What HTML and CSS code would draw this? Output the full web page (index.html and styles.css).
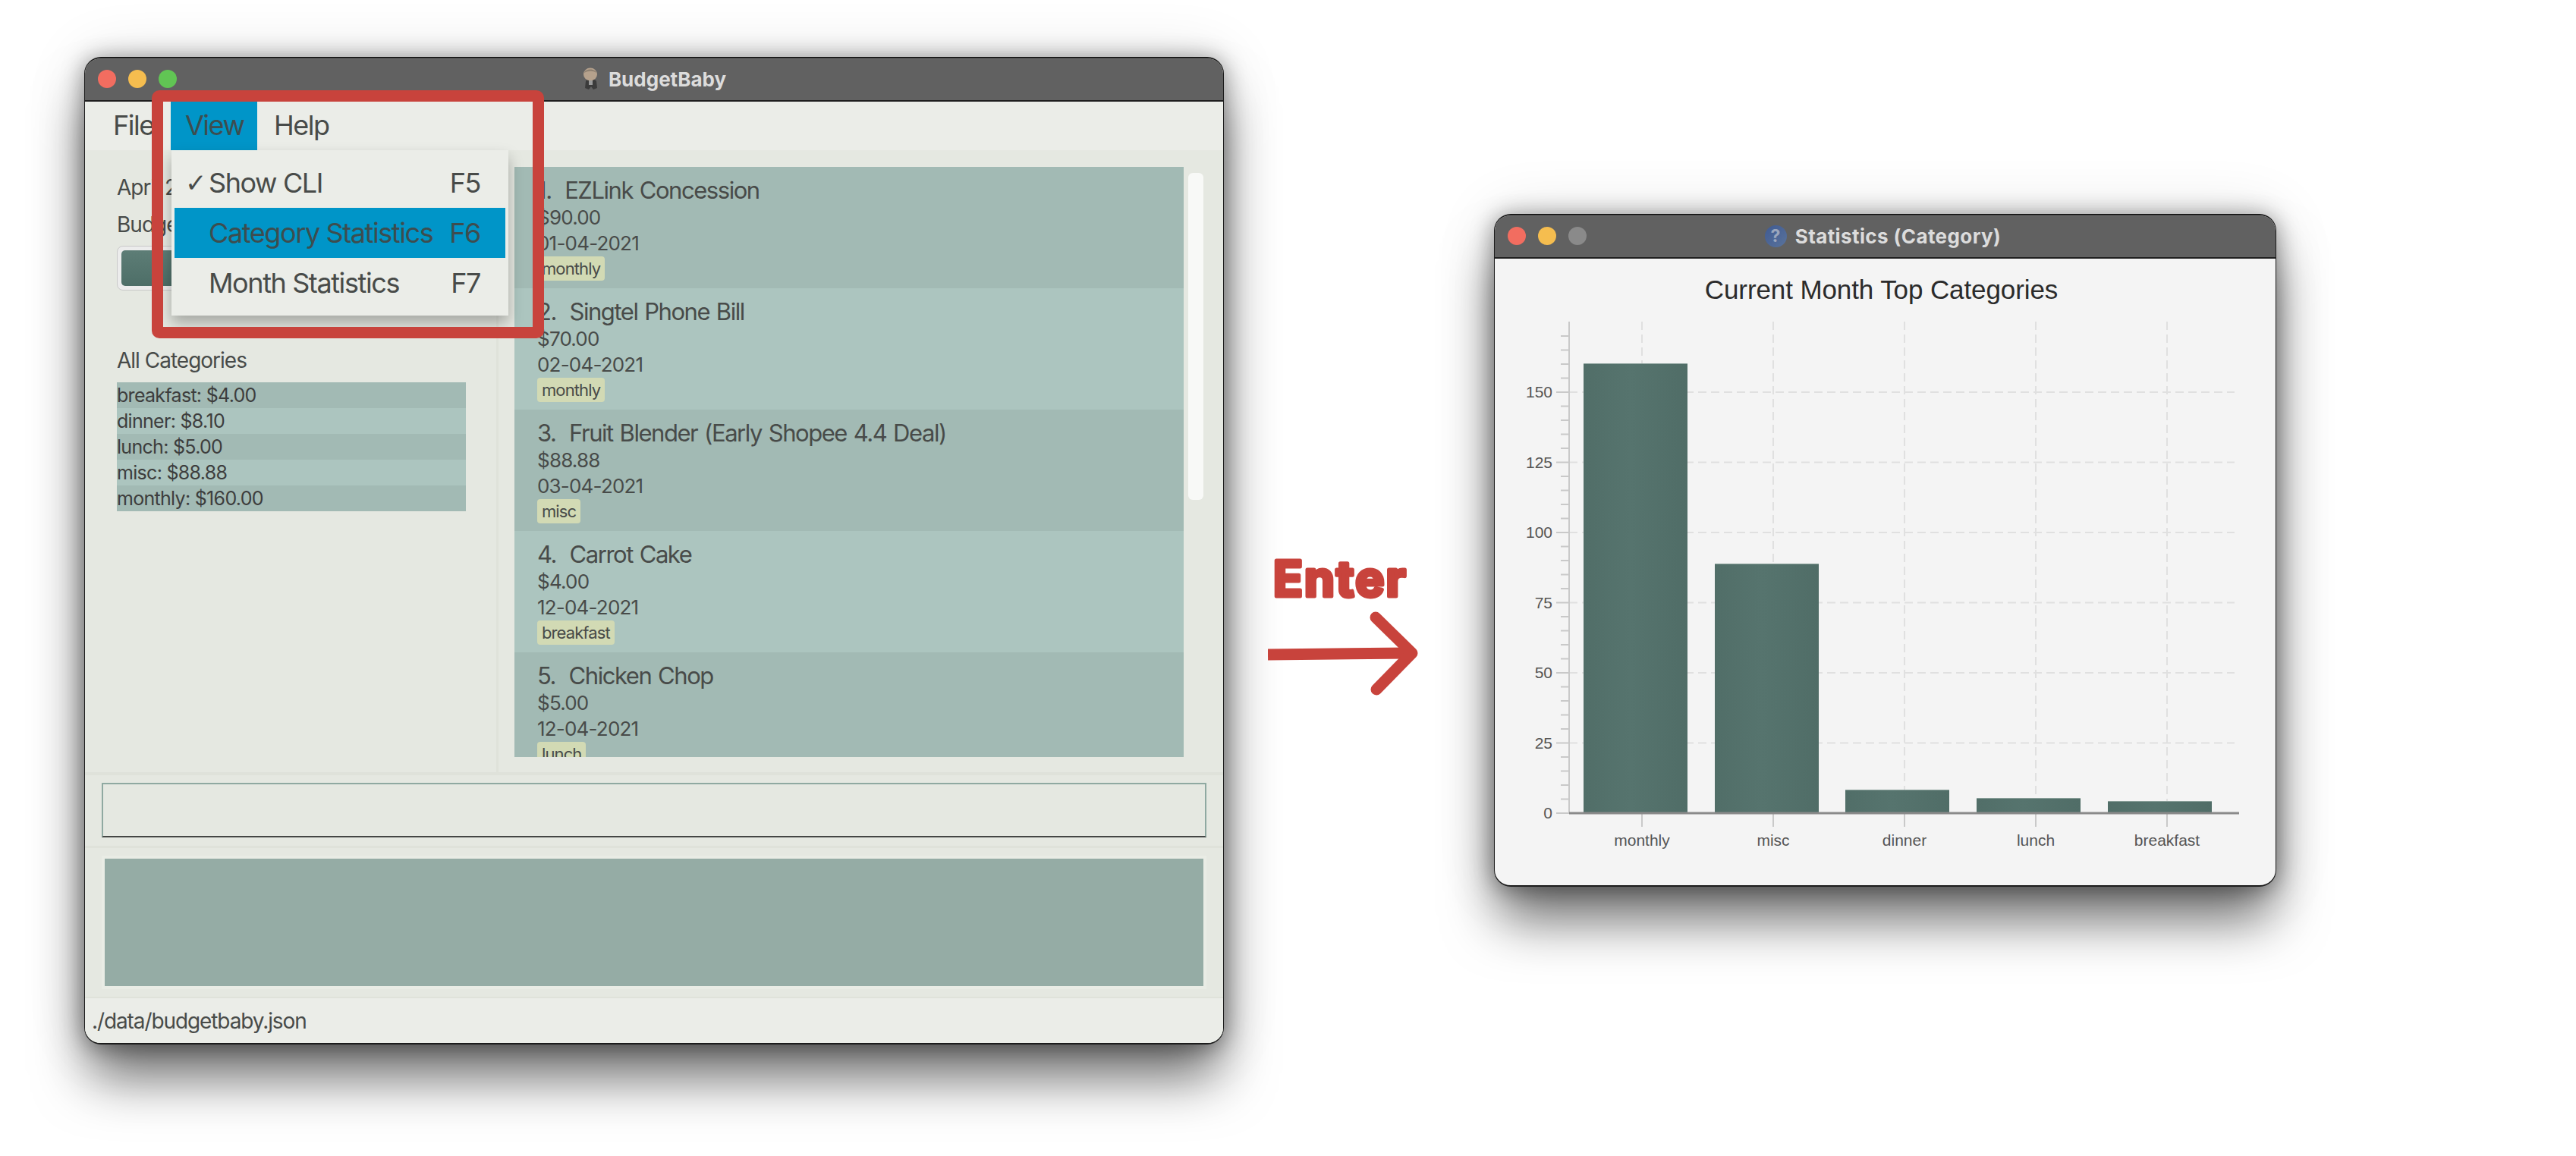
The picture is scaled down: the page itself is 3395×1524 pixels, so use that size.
FILE: index.html
```html
<!DOCTYPE html>
<html lang="en">

<head>
    <meta charset="UTF-8">
    <title>BudgetBaby - View menu</title>
    <link rel="stylesheet" href="styles.css">
</head>

<body>
    <div class="window main-window">
        <div class="titlebar">
            <div class="lights">
                <span class="light red"></span>
                <span class="light yellow"></span>
                <span class="light green"></span>
            </div>
            <div class="win-title">
                <svg class="baby-icon" width="24" height="30" viewBox="0 0 24 30">
                    <path d="M5 18 C5 15 19 15 19 18 L20 27 L15 29 L12 25 L9 29 L4 27 Z" fill="#3b3b3b" />
                    <ellipse cx="11" cy="9" rx="9" ry="8.5" fill="#b5a18c" />
                    <path d="M3 7 C4 1 18 1 19 7 C15 4 8 4 3 7 Z" fill="#8e8071" />
                    <rect x="9" y="17" width="5" height="6" fill="#9a9a9a" />
                </svg>
                <span>BudgetBaby</span>
            </div>
        </div>

        <div class="menubar">
            <span class="menu-item file-item">File</span>
            <span class="menu-item view-item active">View</span>
            <span class="menu-item help-item">Help</span>
        </div>

        <div class="content">
            <div class="left-pane">
                <p class="month-label">April 2021</p>
                <p class="budget-label">Budget</p>
                <div class="budget-bar">
                    <div class="budget-fill"></div>
                </div>
                <p class="cat-heading">All Categories</p>
                <ul class="cat-list">
                    <li>breakfast: $4.00</li>
                    <li>dinner: $8.10</li>
                    <li>lunch: $5.00</li>
                    <li>misc: $88.88</li>
                    <li>monthly: $160.00</li>
                </ul>
            </div>
            <div class="right-pane">
                <div class="fin-list">
                    <div class="fin-card">
                        <div class="fin-title">1.  EZLink Concession</div>
                        <div class="fin-line">$90.00</div>
                        <div class="fin-line">01-04-2021</div>
                        <span class="tag">monthly</span>
                    </div>
                    <div class="fin-card">
                        <div class="fin-title">2.  Singtel Phone Bill</div>
                        <div class="fin-line">$70.00</div>
                        <div class="fin-line">02-04-2021</div>
                        <span class="tag">monthly</span>
                    </div>
                    <div class="fin-card">
                        <div class="fin-title">3.  Fruit Blender (Early Shopee 4.4 Deal)</div>
                        <div class="fin-line">$88.88</div>
                        <div class="fin-line">03-04-2021</div>
                        <span class="tag">misc</span>
                    </div>
                    <div class="fin-card">
                        <div class="fin-title">4.  Carrot Cake</div>
                        <div class="fin-line">$4.00</div>
                        <div class="fin-line">12-04-2021</div>
                        <span class="tag">breakfast</span>
                    </div>
                    <div class="fin-card">
                        <div class="fin-title">5.  Chicken Chop</div>
                        <div class="fin-line">$5.00</div>
                        <div class="fin-line">12-04-2021</div>
                        <span class="tag">lunch</span>
                    </div>
                </div>
                <div class="scroll-thumb"></div>
            </div>
        </div>

        <div class="command-section">
            <div class="command-box"></div>
        </div>

        <div class="result-section">
            <div class="result-box"></div>
        </div>

        <div class="statusbar">./data/budgetbaby.json</div>

        <div class="dropdown">
            <div class="drop-row">
                <span class="drop-check">✓</span>
                <span class="drop-label">Show CLI</span>
                <span>F5</span>
            </div>
            <div class="drop-row selected">
                <span class="drop-check"></span>
                <span class="drop-label">Category Statistics</span>
                <span>F6</span>
            </div>
            <div class="drop-row">
                <span class="drop-check"></span>
                <span class="drop-label">Month Statistics</span>
                <span>F7</span>
            </div>
        </div>
    </div>

    <div class="annotation-box"></div>

    <svg class="enter-note" width="210" height="220" viewBox="0 0 210 220">
        <text class="enter-text" x="7" y="80">Enter</text>
        <path class="arrow-stroke" d="M0 157 L185 155" />
        <path class="arrow-stroke arrow-head" d="M142 108 L190 155 L143 203" />
    </svg>

    <div class="window stats-window">
        <div class="titlebar">
            <div class="lights">
                <span class="light red"></span>
                <span class="light yellow"></span>
                <span class="light grey"></span>
            </div>
            <div class="win-title stats-title">
                <span class="help-icon">?</span>
                <span>Statistics (Category)</span>
            </div>
        </div>

        <div class="chart-area">
            <h1 class="chart-title">Current Month Top Categories</h1>
            <svg class="chart" width="1027" height="760" viewBox="0 0 1027 760">
                <defs>
                    <linearGradient id="barFill" x1="0" x2="1" y1="0" y2="0">
                        <stop offset="0" stop-color="#516e68" />
                        <stop offset="0.45" stop-color="#56746e" />
                        <stop offset="1" stop-color="#506d67" />
                    </linearGradient>
                </defs>

                <!-- grid -->
                <path class="grid-h" d="M97 106H974M97 198.5H974M97 291H974M97 383.5H974M97 476H974M97 568.5H974" />
                <path class="grid-v" d="M193 13V661M366 13V661M539 13V661M712 13V661M885 13V661" />

                <!-- axes -->
                <path class="tick" d="M97 13V661" />
                <path class="tick" d="M86 32h11M86 50.5h11M86 69h11M86 87.5h11M86 124.5h11M86 143h11M86 161.5h11M86 180h11M86 217h11M86 235.5h11M86 254h11M86 272.5h11M86 309.5h11M86 328h11M86 346.5h11M86 365h11M86 402h11M86 420.5h11M86 439h11M86 457.5h11M86 494.5h11M86 513h11M86 531.5h11M86 550h11M86 587h11M86 605.5h11M86 624h11M86 642.5h11" />
                <path class="tick" d="M80 106h17M80 198.5h17M80 291h17M80 383.5h17M80 476h17M80 568.5h17M80 661h17" />
                <path class="tick" d="M193 661v18M366 661v18M539 661v18M712 661v18M885 661v18" />

                <!-- bars -->
                <rect class="bar" x="116" y="68" width="137" height="593" />
                <rect class="bar" x="289" y="332" width="137" height="329" />
                <rect class="bar" x="461" y="630" width="137" height="31" />
                <rect class="bar" x="634" y="641" width="137" height="20" />
                <rect class="bar" x="807" y="645" width="137" height="16" />
                <path class="bar-top" d="M116 68.5h137M289 332.5h137M461 630.5h137M634 641.5h137M807 645.5h137" />

                <path class="x-axis" d="M97 661H980" />

                <text class="axis-label y-label" x="75" y="113">150</text>
                <text class="axis-label y-label" x="75" y="206">125</text>
                <text class="axis-label y-label" x="75" y="298">100</text>
                <text class="axis-label y-label" x="75" y="391">75</text>
                <text class="axis-label y-label" x="75" y="483">50</text>
                <text class="axis-label y-label" x="75" y="576">25</text>
                <text class="axis-label y-label" x="75" y="668">0</text>

                <text class="axis-label x-label" x="193" y="704">monthly</text>
                <text class="axis-label x-label" x="366" y="704">misc</text>
                <text class="axis-label x-label" x="539" y="704">dinner</text>
                <text class="axis-label x-label" x="712" y="704">lunch</text>
                <text class="axis-label x-label" x="885" y="704">breakfast</text>
            </svg>
        </div>
    </div>
</body>

</html>
```

FILE: styles.css
```css
* {
    margin: 0;
    padding: 0;
    box-sizing: border-box;
    list-style: none;
}

body {
    width: 3395px;
    height: 1524px;
    position: relative;
    overflow: hidden;
    background-color: white;
    font-family: "Inter", "Liberation Sans", sans-serif;
    color: #484b49;
}

/* windows sit on a free canvas */
.window {
    position: absolute;
    display: flex;
    flex-direction: column;
    border-style: solid;
    border-color: #1c1c1c;
    border-width: 2px 1px;
    border-radius: 22px;
    overflow: hidden;
    background-color: #e5e8e1;
    box-shadow: 0 50px 70px -6px rgba(0, 0, 0, 0.55), 0 2px 30px rgba(0, 0, 0, 0.4), 0 0 80px rgba(0, 0, 0, 0.12);
}

.main-window {
    left: 111px;
    top: 75px;
    width: 1502px;
    height: 1302px;
}

.stats-window {
    left: 1969px;
    top: 282px;
    width: 1031px;
    height: 887px;
    background-color: #f4f4f4;
}

.titlebar {
    flex: none;
    height: 57px;
    display: grid;
    grid-template-columns: 1fr auto 1fr;
    align-items: center;
    padding: 0 17px 2px;
    background-color: #616161;
    border-top: 1px solid #7c7c7c;
    border-bottom: 2px solid #1f1f1f;
}

.lights {
    display: flex;
    gap: 16px;
}

.light {
    width: 24px;
    height: 24px;
    border-radius: 50%;
}

.red {
    background-color: #f26d60;
}

.yellow {
    background-color: #f5bd4f;
}

.green {
    background-color: #61c554;
}

.grey {
    background-color: #8a8a8a;
}

.win-title {
    display: flex;
    align-items: center;
    gap: 11px;
    font-size: 26px;
    font-weight: 700;
    color: #dcdcdc;
}

.stats-title {
    letter-spacing: 0.4px;
    margin-left: -6px;
}

.help-icon {
    width: 29px;
    height: 29px;
    border-radius: 50%;
    display: flex;
    justify-content: center;
    align-items: center;
    font-size: 23px;
    color: #9aa6bd;
    background: linear-gradient(135deg, #3f5a92, #5a739c);
}

.menubar {
    flex: none;
    height: 64px;
    display: flex;
    align-items: stretch;
    background-color: #ebede8;
    font-size: 36px;
    letter-spacing: -1.5px;
}

.menu-item {
    display: flex;
    align-items: center;
    padding-bottom: 2px;
}

.file-item {
    width: 113px;
    padding-left: 37px;
}

.view-item {
    width: 114px;
    padding-left: 19px;
}

.help-item {
    padding-left: 22px;
}

.active {
    background-color: #0095c8;
    color: #3d4d4f;
}

.content {
    flex: none;
    height: 824px;
    display: flex;
    border-bottom: 4px solid #dfe2da;
}

.left-pane {
    flex: none;
    width: 545px;
    padding: 32px 40px 0 42px;
    border-right: 3px solid #dfe2da;
}

.month-label,
.budget-label {
    font-size: 28px;
    letter-spacing: -1px;
    line-height: 34px;
}

.budget-label {
    margin-top: 15px;
}

.budget-bar {
    margin-top: 11px;
    height: 59px;
    padding: 5px;
    border: 1px solid #c9c9c9;
    border-radius: 8px;
    background-color: #ececec;
}

.budget-fill {
    width: 100%;
    height: 100%;
    border-radius: 5px;
    background: linear-gradient(#5d7d76, #4d6e67);
}

.cat-heading {
    margin-top: 75px;
    font-size: 28px;
    letter-spacing: -1px;
    line-height: 34px;
}

.cat-list {
    margin-top: 12px;
    font-size: 25px;
    color: #3d3d3d;
    letter-spacing: -0.7px;
}

.cat-list li {
    height: 34px;
    line-height: 34px;
    background-color: #acc5bf;
}

.cat-list li:nth-child(odd) {
    background-color: #a2bab4;
}

.right-pane {
    flex: 1;
    display: flex;
    align-items: flex-start;
    padding: 22px 0 0 21px;
}

.fin-list {
    width: 882px;
    height: 778px;
    flex: none;
    overflow: hidden;
}

.fin-card {
    height: 160px;
    padding: 12px 0 0 30px;
    background-color: #acc5bf;
}

.fin-card:nth-child(odd) {
    background-color: #a2bab4;
}

.fin-title {
    font-size: 31px;
    letter-spacing: -1.45px;
    word-spacing: 1.5px;
    line-height: 38px;
    white-space: pre;
}

.fin-line {
    font-size: 26px;
    letter-spacing: -0.8px;
    line-height: 34px;
}

.tag {
    display: inline-block;
    height: 32px;
    padding: 0 6px;
    border-radius: 4px;
    background-color: #d2dab4;
    font-size: 22px;
    letter-spacing: -0.9px;
    line-height: 32px;
}

.scroll-thumb {
    flex: none;
    width: 20px;
    height: 431px;
    margin: 8px 0 0 6px;
    border-radius: 6px;
    background-color: #f8f9f7;
}

.command-section {
    flex: none;
    height: 96px;
    padding: 10px 22px 0;
    border-bottom: 3px solid #dfe2da;
}

.command-box {
    height: 72px;
    border: 2px solid #8fa9a1;
    border-bottom-color: #444644;
}

.result-section {
    flex: none;
    height: 198px;
    padding: 10px 22px;
    border-bottom: 2px solid #dfe2da;
}

.result-box {
    height: 176px;
    background-color: #95aca5;
    border: 4px solid #e9ece5;
}

.statusbar {
    flex: 1;
    display: flex;
    align-items: center;
    padding-left: 9px;
    background-color: #ebede8;
    font-size: 28px;
    letter-spacing: -1.1px;
}

.dropdown {
    position: absolute;
    left: 114px;
    top: 121px;
    width: 444px;
    height: 218px;
    padding: 10px 4px;
    background-color: #ebede8;
    box-shadow: 0 10px 18px rgba(0, 0, 0, 0.28);
    font-size: 36px;
    letter-spacing: -1.4px;
}

.drop-row {
    height: 66px;
    display: flex;
    align-items: center;
    padding: 0 33px 0 14px;
}

.drop-check {
    width: 32px;
    font-family: "DejaVu Sans", sans-serif;
    font-size: 34px;
    letter-spacing: 0;
}

.drop-label {
    flex: 1;
    margin-left: -1px;
}

.selected {
    background-color: #0095c8;
    color: #3d4d4f;
}

.annotation-box {
    position: absolute;
    left: 200px;
    top: 119px;
    width: 517px;
    height: 327px;
    border: 15px solid #c8433c;
    border-radius: 10px;
}

.enter-note {
    position: absolute;
    left: 1671px;
    top: 706px;
}

.enter-text {
    font-family: "Inter", sans-serif;
    font-size: 64px;
    font-weight: 700;
    letter-spacing: 2.2px;
    fill: #c8433c;
    stroke: #c8433c;
    stroke-width: 5;
    stroke-linejoin: round;
}

.arrow-stroke {
    fill: none;
    stroke: #c8433c;
    stroke-width: 15;
}

.arrow-head {
    stroke-linecap: round;
    stroke-linejoin: round;
}

.chart-area {
    flex: 1;
}

.chart-title {
    height: 70px;
    padding: 21px 10px 0 0;
    text-align: center;
    font-family: "Liberation Sans", sans-serif;
    font-size: 35px;
    font-weight: 400;
    letter-spacing: -0.1px;
    line-height: 40px;
    color: #2b2b2b;
}

.chart {
    display: block;
    margin-left: 1px;
}

.grid-h,
.grid-v {
    fill: none;
    stroke: #e0e0e0;
    stroke-width: 2;
    stroke-dasharray: 11 6;
}

.tick {
    fill: none;
    stroke: #c9c9c9;
    stroke-width: 2;
}

.x-axis {
    fill: none;
    stroke: #8a8a8a;
    stroke-width: 3;
}

.bar {
    fill: url(#barFill);
}

.bar-top {
    fill: none;
    stroke: #8aa09a;
    stroke-width: 1;
}

.axis-label {
    font-family: "Liberation Sans", sans-serif;
    font-size: 21px;
    fill: #555555;
}

.y-label {
    text-anchor: end;
}

.x-label {
    text-anchor: middle;
}
```
